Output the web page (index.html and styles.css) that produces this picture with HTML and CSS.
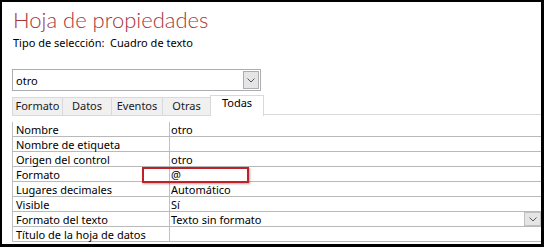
FILE: index.html
```html
<!DOCTYPE html>
<html lang="es">
<head>
    <meta charset="UTF-8">
    <title>Hoja de propiedades</title>
    <link rel="stylesheet" href="styles.css">
</head>
<body>
    <div class="frame">
        <h1 class="title">Hoja de propiedades</h1>
        <div class="selection">Tipo de selección:&nbsp; Cuadro de texto</div>

        <div class="combo">
            <span class="combo-text">otro</span>
            <span class="combo-btn">
                <svg width="8" height="5" viewBox="0 0 8 5"><path d="M0.5 0.5 L4 4 L7.5 0.5" fill="none" stroke="#555" stroke-width="1"/></svg>
            </span>
        </div>

        <div class="tabs">
            <div class="tab">Formato</div>
            <div class="tab">Datos</div>
            <div class="tab">Eventos</div>
            <div class="tab">Otras</div>
            <div class="tab active">Todas</div>
            <div class="tab-rest"></div>
        </div>

        <div class="props">
            <div class="row"><div class="label">Nombre</div><div class="value">otro</div></div>
            <div class="row"><div class="label">Nombre de etiqueta</div><div class="value"></div></div>
            <div class="row"><div class="label">Origen del control</div><div class="value">otro</div></div>
            <div class="row"><div class="label">Formato</div><div class="value">@</div></div>
            <div class="row"><div class="label">Lugares decimales</div><div class="value">Automático</div></div>
            <div class="row"><div class="label">Visible</div><div class="value">Sí</div></div>
            <div class="row"><div class="label">Formato del texto</div><div class="value">Texto sin formato
                <span class="cell-btn">
                    <svg width="8" height="5" viewBox="0 0 8 5"><path d="M0.5 0.5 L4 4 L7.5 0.5" fill="none" stroke="#555" stroke-width="1"/></svg>
                </span></div></div>
            <div class="row"><div class="label">Título de la hoja de datos</div><div class="value"></div></div>
        </div>

        <div class="highlight"></div>
    </div>
</body>
</html>
```

FILE: styles.css
```css
body {
    margin: 0;
    background: #fff;
    font-family: "Segoe UI", "Noto Sans", sans-serif;
}
.frame {
    position: relative;
    width: 544px;
    height: 247px;
    box-sizing: border-box;
    border-style: solid;
    border-color: #000;
    border-width: 2px 3px 3px 2px;
    padding-left: 10px;
    overflow: hidden;
    background: #fff;
}
.title {
    margin: 5px 0 0 1px;
    font-family: Lato, sans-serif;
    font-weight: 300;
    font-size: 22px;
    line-height: 26px;
    color: #a4373a;
}
.selection {
    margin: 2px 0 0 1px;
    font-size: 11px;
    line-height: 15px;
    color: #000;
}
.combo {
    display: flex;
    align-items: center;
    width: 249px;
    height: 22px;
    box-sizing: border-box;
    margin-top: 19px;
    border: 1px solid #abadb3;
    font-size: 11px;
}
.combo-text {
    flex: 1;
    padding-left: 3px;
}
.combo-btn {
    display: flex;
    align-items: center;
    justify-content: center;
    width: 16px;
    height: 18px;
    margin-right: 1px;
    background: #e5e5e5;
    border: 1px solid #adadad;
    box-sizing: border-box;
}
.tabs {
    display: flex;
    align-items: flex-end;
    height: 22px;
    margin-top: 3px;
    font-size: 11px;
}
.tab {
    height: 19px;
    box-sizing: border-box;
    line-height: 16px;
    text-align: center;
    background: #f0f0f0;
    border: 1px solid #d9d9d9;
    border-right: none;
    color: #1a1a1a;
}
.tab:nth-child(1) { width: 50px; }
.tab:nth-child(2) { width: 49px; }
.tab:nth-child(3) { width: 51px; }
.tab:nth-child(4) { width: 48px; }
.tab.active {
    width: 54px;
    height: 21px;
    line-height: 14px;
    background: #fff;
    border-right: 1px solid #d9d9d9;
    border-bottom: none;
    color: #000;
}
.tab-rest {
    flex: 1;
    border-bottom: 1px solid #d9d9d9;
    margin-bottom: 1px;
}
.props {
    width: 528px;
    margin-top: 6px;
    font-size: 11px;
    border-left: 1px solid #c0c0c0;
    border-right: 1px solid #c0c0c0;
}
.row {
    display: flex;
    height: 15px;
    box-sizing: border-box;
    border-bottom: 1px solid #b9b9b9;
    line-height: 15px;
}
.label {
    width: 153px;
    padding-left: 3px;
    border-right: 1px solid #c0c0c0;
    white-space: nowrap;
}
.value {
    flex: 1;
    position: relative;
    padding-left: 1px;
}
.cell-btn {
    position: absolute;
    right: 0;
    top: 0;
    display: flex;
    align-items: center;
    justify-content: center;
    width: 17px;
    height: 14px;
    box-sizing: border-box;
    background: #e5e5e5;
    border: 1px solid #c0c0c0;
}
.highlight {
    position: absolute;
    left: 140px;
    top: 165px;
    width: 107px;
    height: 16px;
    box-sizing: border-box;
    border: 2px solid #c0202a;
    box-shadow: 1px 1px 2px rgba(0, 0, 0, 0.35);
}
```
